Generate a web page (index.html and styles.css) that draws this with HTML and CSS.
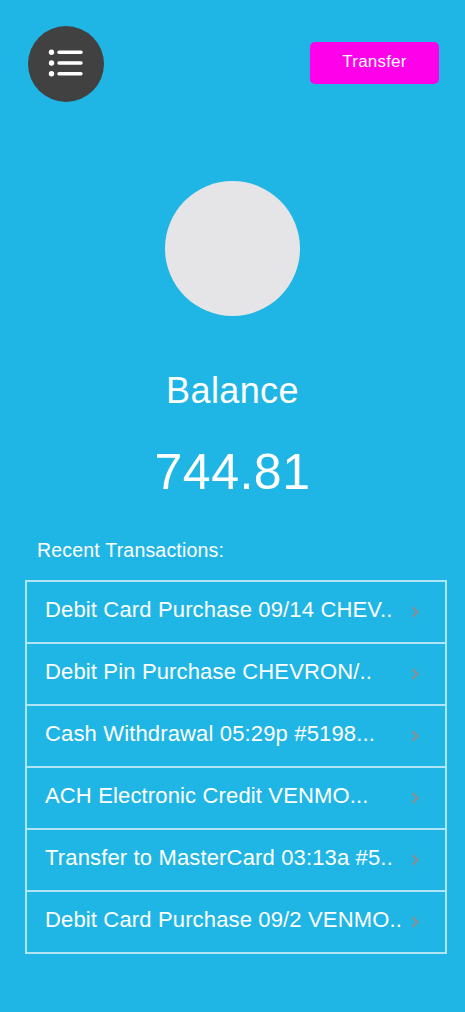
FILE: index.html
```html
<!DOCTYPE html>
<html lang="en">
<head>
<meta charset="utf-8">
<title>Balance</title>
<link rel="stylesheet" href="styles.css">
</head>
<body>
<div class="page">
  <header class="header">
    <button class="menu-btn" aria-label="Menu">
      <svg width="76" height="76" viewBox="0 0 76 76">
        <g fill="#ffffff">
          <circle cx="23.5" cy="26.3" r="2.7"/>
          <circle cx="23.5" cy="37" r="2.7"/>
          <circle cx="23.5" cy="47.7" r="2.7"/>
        </g>
        <g stroke="#ffffff" stroke-width="3.4" stroke-linecap="round">
          <line x1="31" y1="26.3" x2="53" y2="26.3"/>
          <line x1="31" y1="37" x2="53" y2="37"/>
          <line x1="31" y1="47.7" x2="53" y2="47.7"/>
        </g>
      </svg>
    </button>
    <button class="transfer-btn">Transfer</button>
  </header>

  <div class="avatar"></div>

  <h1 class="balance-label">Balance</h1>
  <div class="balance-amount">744.81</div>

  <h2 class="recent-title">Recent Transactions:</h2>

  <ul class="tx-list">
    <li class="tx-row"><span class="tx-text">Debit Card Purchase 09/14 CHEV..</span><span class="chev"></span></li>
    <li class="tx-row"><span class="tx-text">Debit Pin Purchase CHEVRON/..</span><span class="chev"></span></li>
    <li class="tx-row"><span class="tx-text">Cash Withdrawal 05:29p #5198...</span><span class="chev"></span></li>
    <li class="tx-row"><span class="tx-text">ACH Electronic Credit VENMO...</span><span class="chev"></span></li>
    <li class="tx-row"><span class="tx-text">Transfer to MasterCard 03:13a #5..</span><span class="chev"></span></li>
    <li class="tx-row"><span class="tx-text">Debit Card Purchase 09/2 VENMO..</span><span class="chev"></span></li>
  </ul>
</div>
</body>
</html>
```

FILE: styles.css
```css
html, body {
  margin: 0;
  padding: 0;
  background: #1fb6e6;
}

body {
  font-family: "Liberation Sans", Arial, sans-serif;
  color: #ffffff;
  width: 465px;
  min-height: 1012px;
}

.page {
  display: flex;
  flex-direction: column;
  align-items: center;
}

.header {
  align-self: stretch;
  display: flex;
  justify-content: space-between;
  align-items: flex-start;
  padding: 26px 26px 0 28px;
}

.menu-btn {
  width: 76px;
  height: 76px;
  border-radius: 50%;
  background: #414141;
  border: none;
  padding: 0;
  display: block;
  cursor: pointer;
}

.menu-btn svg {
  display: block;
}

.transfer-btn {
  margin-top: 16px;
  width: 129px;
  height: 42px;
  border: none;
  border-radius: 5px;
  background: #ff00ea;
  color: #ffffff;
  font-family: "Liberation Sans", Arial, sans-serif;
  font-size: 17px;
  letter-spacing: 0.2px;
  padding: 0 0 2px 0;
  cursor: pointer;
}

.avatar {
  margin-top: 79px;
  width: 135px;
  height: 135px;
  border-radius: 50%;
  background: #e5e5e8;
}

.balance-label {
  margin: 57px 0 0 0;
  font-weight: normal;
  font-size: 36px;
  line-height: 36px;
  letter-spacing: 0.4px;
}

.balance-amount {
  margin-top: 38px;
  font-size: 50px;
  line-height: 50px;
  letter-spacing: 0.5px;
}

.recent-title {
  align-self: flex-start;
  margin: 43px 0 0 37px;
  font-weight: normal;
  font-size: 19.5px;
  line-height: 20px;
  letter-spacing: 0.2px;
}

.tx-list {
  align-self: flex-start;
  list-style: none;
  margin: 20px 0 0 25px;
  padding: 0;
  width: 420px;
  border: 1px solid rgba(255, 255, 255, 0.65);
}

.tx-row {
  height: 56px;
  padding: 0 0 4px 18px;
  border: 1px solid rgba(255, 255, 255, 0.65);
  display: flex;
  align-items: center;
  justify-content: space-between;
}

.tx-text {
  font-size: 22px;
  letter-spacing: 0.15px;
  white-space: nowrap;
}

.chev {
  width: 6px;
  height: 6px;
  border-right: 2px solid #8c8c8c;
  border-top: 2px solid #8c8c8c;
  transform: rotate(45deg);
  margin: 4px 28px 0 0;
}
```
